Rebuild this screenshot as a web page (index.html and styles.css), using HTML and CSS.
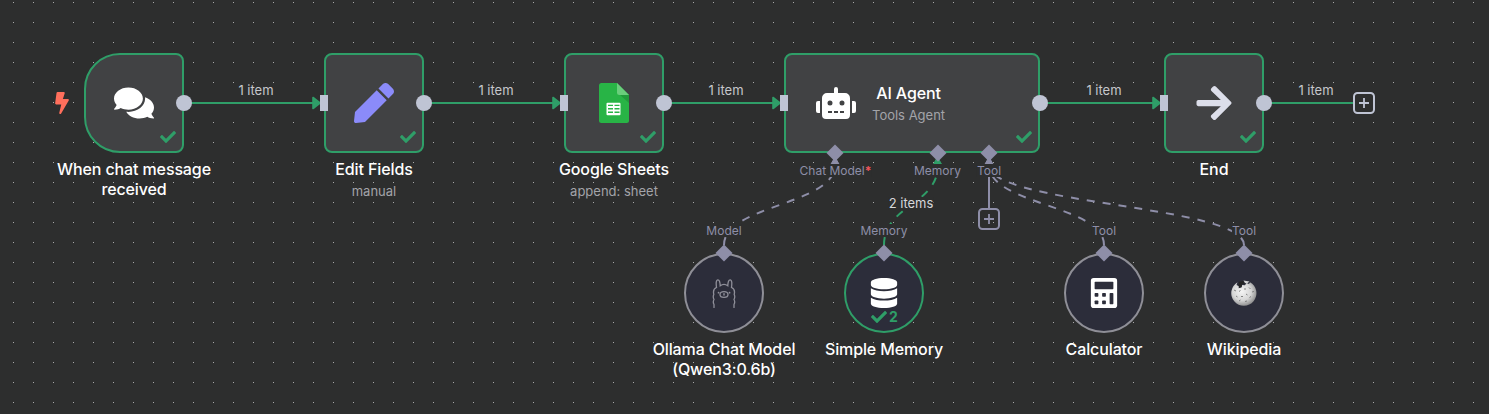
FILE: index.html
```html
<!DOCTYPE html>
<html lang="en">
<head>
<meta charset="utf-8">
<title>Workflow</title>
<link rel="stylesheet" href="styles.css">
</head>
<body>
<svg class="defs" width="0" height="0" aria-hidden="true">
  <symbol id="check" viewBox="0 0 512 512"><path d="M173.898 439.404l-166.4-166.4c-9.997-9.997-9.997-26.206 0-36.204l36.203-36.204c9.997-9.998 26.207-9.998 36.204 0L192 312.69 432.095 72.596c9.997-9.997 26.207-9.997 36.204 0l36.203 36.204c9.997 9.997 9.997 26.206 0 36.204l-294.4 294.401c-9.998 9.997-26.207 9.997-36.204-.001z"/></symbol>
  <symbol id="plus" viewBox="0 0 22 22"><rect x="1" y="1" width="20" height="20" rx="3.5" fill="none" stroke="currentColor" stroke-width="2"/><path d="M11 6v10M6 11h10" stroke="currentColor" stroke-width="1.8"/></symbol>
</svg>
<main class="canvas">
  <svg class="edges" width="1489" height="414" viewBox="0 0 1489 414">
    <defs>
      <path id="head" d="M-7 -5.5L0 0L-7 5.5Z" stroke-width="1.6" stroke-linejoin="round"/>
      <path id="head-up" d="M0 0L4.200 7.500H-4.200Z" stroke-width="1" stroke-linejoin="round"/>
    </defs>
    <g class="edge">
      <path d="M184 103H314M424 103H554M664 103H774M1040 103H1154M1264 103H1353"/>
      <g class="edge-head">
        <use href="#head" x="320" y="103"/><use href="#head" x="560" y="103"/><use href="#head" x="780" y="103"/><use href="#head" x="1160" y="103"/>
        <use href="#head-up" x="937.500" y="157"/>
      </g>
      <path class="dashed" d="M884 245C884 205 938 205 938 165"/>
    </g>
    <g class="edge edge-ai">
      <path class="dashed" d="M724 245C724 205 835 205 835 165"/>
      <path class="dashed" d="M1104 245C1104 205 989 205 989 165"/>
      <path class="dashed" d="M1244 245C1244 205 989 205 989 165"/>
      <path d="M989 160V208"/>
      <g class="edge-head">
        <use href="#head-up" x="835" y="157"/>
        <use href="#head-up" x="989" y="157"/>
      </g>
    </g>
  </svg>

  <span class="edge-label at-256">1 item</span>
  <span class="edge-label at-496">1 item</span>
  <span class="edge-label at-726">1 item</span>
  <span class="edge-label at-1104">1 item</span>
  <span class="edge-label at-1316">1 item</span>
  <span class="edge-label at-memory">2 items</span>

  <svg class="bolt" viewBox="0 0 320 512"><path d="M296 160H180.6l42.6-129.8C227.2 15 215.7 0 200 0H56C44 0 33.8 8.9 32.2 20.8l-32 240C-1.7 275.2 9.5 288 24 288h118.7L96.6 482.5c-3.6 15.2 8 29.5 23.3 29.5 8.4 0 16.4-4.4 20.8-12l176-304c9.3-15.9-2.2-36-20.7-36z"/></svg>

  <section class="node node-chat">
    <div class="box box-trigger">
      <svg class="icon-40" viewBox="0 0 576 512" fill="#fff"><path d="M416 192c0-88.4-93.1-160-208-160S0 103.6 0 192c0 34.3 14.1 65.9 38 92-13.4 30.2-35.5 54.2-35.8 54.5-2.2 2.3-2.8 5.7-1.5 8.7S4.8 352 8 352c36.6 0 66.9-12.3 88.7-25 32.2 15.7 70.3 25 111.3 25 114.9 0 208-71.6 208-160zm122 220c23.9-26 38-57.7 38-92 0-66.9-53.5-124.2-129.3-148.1.9 6.6 1.3 13.3 1.3 20.1 0 105.9-107.7 192-240 192-10.8 0-21.3-.8-31.7-1.9C207.8 439.6 281.8 480 368 480c41 0 79.1-9.2 111.3-25 21.8 12.7 52.1 25 88.7 25 3.2 0 6.1-1.9 7.3-4.8 1.3-2.9.7-6.3-1.5-8.7-.3-.3-22.4-24.2-35.8-54.5z"/></svg>
      <svg class="status"><use href="#check"/></svg>
      <i class="port-out"></i>
    </div>
    <div class="title">When chat message<br>received</div>
  </section>

  <section class="node node-edit">
    <div class="box">
      <svg class="icon-40" viewBox="0 0 512 512" fill="#8b8bfa"><path d="M290.74 93.24l128.02 128.02-277.99 277.99-114.14 12.6C11.35 513.54-1.56 500.62.14 485.34l12.7-114.22 277.9-277.88zm207.2-19.06l-60.11-60.11c-18.75-18.75-49.16-18.75-67.91 0l-56.55 56.55 128.02 128.02 56.55-56.55c18.75-18.76 18.75-49.16 0-67.91z"/></svg>
      <svg class="status"><use href="#check"/></svg>
      <i class="port-in"></i><i class="port-out"></i>
    </div>
    <div class="title">Edit Fields</div>
    <div class="subtitle">manual</div>
  </section>

  <section class="node node-sheets">
    <div class="box">
      <svg class="icon-40" viewBox="0 0 40 40">
        <path d="M7.500 0H23L35 12V37.500Q35 40 32.500 40H7.500Q5 40 5 37.500V2.500Q5 0 7.500 0Z" fill="#28b446"/>
        <path d="M25 11L35 20V12Z" fill="#219b3b"/>
        <path d="M23 0L35 12H25.500Q23 12 23 9.500Z" fill="#6ace7c"/>
        <rect x="12.500" y="19.700" width="14" height="12.600" rx="1" fill="#fff"/>
        <path d="M14 22.400h5M20.500 22.400h5M14 25.800h5M20.500 25.800h5M14 29.200h5M20.500 29.200h5" stroke="#28b446" stroke-width="1.400"/>
      </svg>
      <svg class="status"><use href="#check"/></svg>
      <i class="port-in"></i><i class="port-out"></i>
    </div>
    <div class="title">Google Sheets</div>
    <div class="subtitle">append: sheet</div>
  </section>

  <section class="node node-agent">
    <div class="box box-agent">
      <svg class="icon-40" viewBox="0 0 640 512" fill="#fff"><path d="M32,224H64V416H32A31.96166,31.96166,0,0,1,0,384V256A31.96166,31.96166,0,0,1,32,224Zm512-48V448a64.06328,64.06328,0,0,1-64,64H160a64.06328,64.06328,0,0,1-64-64V176a79.974,79.974,0,0,1,80-80H288V32a32,32,0,0,1,64,0V96H464A79.974,79.974,0,0,1,544,176ZM264,256a40,40,0,1,0-40,40A39.997,39.997,0,0,0,264,256Zm-8,128H192v32h64Zm96,0H288v32h64ZM456,256a40,40,0,1,0-40,40A39.997,39.997,0,0,0,456,256Zm-8,128H384v32h64ZM640,256V384a31.96166,31.96166,0,0,1-32,32H576V224h32A31.96166,31.96166,0,0,1,640,256Z"/></svg>
      <div class="agent-text">
        <div class="title">AI Agent</div>
        <div class="subtitle">Tools Agent</div>
      </div>
      <svg class="status"><use href="#check"/></svg>
      <i class="port-in"></i><i class="port-out"></i>
      <i class="diamond d-model"></i><i class="diamond d-memory"></i><i class="diamond d-tool"></i>
      <span class="port-label l-model">Chat Model<b>*</b></span>
      <span class="port-label l-memory">Memory</span>
      <span class="port-label l-tool">Tool</span>
    </div>
  </section>

  <section class="node node-end">
    <div class="box">
      <svg class="icon-40" viewBox="0 0 448 512" fill="#dcdeea"><path d="M190.5 66.9l22.2-22.2c9.4-9.4 24.6-9.4 33.9 0L441 239c9.4 9.4 9.4 24.6 0 33.9L246.6 467.3c-9.4 9.4-24.6 9.4-33.9 0l-22.2-22.2c-9.5-9.5-9.300-25 .4-34.300L311.400 296H24c-13.300 0-24-10.700-24-24v-32c0-13.300 10.700-24 24-24h287.400L190.900 101.200c-9.800-9.300-10-24.800-.4-34.300z"/></svg>
      <svg class="status"><use href="#check"/></svg>
      <i class="port-in"></i><i class="port-out"></i>
    </div>
    <div class="title">End</div>
  </section>
  <svg class="plus plus-end"><use href="#plus"/></svg>
  <svg class="plus plus-tool"><use href="#plus"/></svg>

  <section class="node sub node-ollama">
    <div class="round">
      <svg class="icon-30" viewBox="0 0 30 30" fill="none" stroke="#8f8f99" stroke-width="1.300" stroke-linecap="round">
        <path d="M5 29.500V26.500Q3.600 24 5 21.500Q3.600 19 4.800 16.500Q3.500 11 7.500 9.500Q6.500 2 8.700 1.800Q11 1.600 11.200 7.800Q15 4.800 18.800 7.800Q19 1.600 21.300 1.800Q23.500 2 22.500 9.500Q26.500 11 25.200 16.500Q26.400 19 25 21.500Q26.400 24 25 26.500V29.500"/>
        <ellipse cx="15" cy="16.500" rx="4" ry="2.900"/>
        <path d="M14.300 15.800L15 16.300L15.700 15.800M15 16.300V17.400" stroke-width="1"/>
        <path d="M9.500 14.700h.1M20.500 14.700h.1" stroke-width="1.700"/>
      </svg>
      <i class="diamond d-top"></i>
      <span class="port-label l-top">Model</span>
    </div>
    <div class="title">Ollama Chat Model<br>(Qwen3:0.6b)</div>
  </section>

  <section class="node sub node-memory">
    <div class="round round-ok">
      <svg class="icon-30" viewBox="0 0 448 512" fill="#fff"><path d="M448 73.143v45.714C448 159.143 347.667 192 224 192S0 159.143 0 118.857V73.143C0 32.857 100.333 0 224 0s224 32.857 224 73.143zM448 176v102.857C448 319.143 347.667 352 224 352S0 319.143 0 278.857V176c48.125 33.143 136.208 48.572 224 48.572S399.874 209.143 448 176zm0 160v102.857C448 479.143 347.667 512 224 512S0 479.143 0 438.857V336c48.125 33.143 136.208 48.572 224 48.572S399.874 369.143 448 336z"/></svg>
      <div class="runs"><svg><use href="#check"/></svg><span>2</span></div>
      <i class="diamond d-top"></i>
      <span class="port-label l-top">Memory</span>
    </div>
    <div class="title">Simple Memory</div>
  </section>

  <section class="node sub node-calc">
    <div class="round">
      <svg class="icon-30" viewBox="0 0 448 512"><rect width="448" height="512" rx="48" fill="#fff"/><g fill="#2c2d3a"><rect x="64" y="64" width="320" height="128" rx="13"/><rect x="64" y="256" width="64" height="64" rx="13"/><rect x="192" y="256" width="64" height="64" rx="13"/><rect x="64" y="384" width="64" height="64" rx="13"/><rect x="192" y="384" width="64" height="64" rx="13"/><rect x="320" y="256" width="64" height="192" rx="13"/></g></svg>
      <i class="diamond d-top"></i>
      <span class="port-label l-top">Tool</span>
    </div>
    <div class="title">Calculator</div>
  </section>

  <section class="node sub node-wiki">
    <div class="round">
      <svg class="icon-30" viewBox="0 0 30 30">
        <defs><radialGradient id="globe" cx=".42" cy=".4" r=".62"><stop offset="0" stop-color="#f4f4f4"/><stop offset=".6" stop-color="#d6d6d6"/><stop offset="1" stop-color="#8d8d8d"/></radialGradient></defs>
        <path d="M8.500 4.300L7.500 7L10 8.200L9.600 10.300L12.500 9.600L13.200 7L16 7.200L17.500 5L20 6L21 4.200A12.600 12.600 0 1 1 8.500 4.300Z" fill="url(#globe)"/>
        <path d="M10 3.800L14 3L16 5.500L13 6L12.500 9L10 9.500L9.500 7.500Z" fill="#242424"/>
        <path d="M14.500 2.600L20.500 3.600L18 5.400L16 5Z" fill="#d4d4d4"/>
        <path d="M5 12l2 1M10 13.500l1.500-1M15 11h2M20 9.500l1.500 1.500M23 14l2-.5M7 18l1.500 1M12 18.500h2M17 16l1.500 1M20.500 19.500l1.500-1M10 23l1.500-1M16 23.500l2-.5" stroke="#777" stroke-width=".9"/>
      </svg>
      <i class="diamond d-top"></i>
      <span class="port-label l-top">Tool</span>
    </div>
    <div class="title">Wikipedia</div>
  </section>
</main>
</body>
</html>
```
FILE: styles.css
```css
:root {
  --bg: #2d2e2e;
  --green: #2f9e68;
  --port: #bfc4d4;
  --ai: #8e8ea8;
}
body { margin: 0; background: var(--bg); font-family: Inter, "Liberation Sans", sans-serif; }
.defs { position: absolute; }
.canvas {
  position: relative;
  width: 1489px;
  height: 414px;
  overflow: hidden;
  background-image: conic-gradient(from 270deg at 1px 1px, #a9aaaa 90deg, transparent 0);
  background-size: 20px 20px;
  background-position: 13px 2px;
}
.edges { position: absolute; inset: 0; }
.edge { fill: none; stroke: var(--green); stroke-width: 2; }
.edge-ai { stroke: var(--ai); }
.edge-head { fill: var(--green); }
.edge-ai .edge-head { fill: var(--ai); }
.dashed { stroke-dasharray: 8 8; }

.edge-label {
  position: absolute;
  top: 82px;
  transform: translateX(-50%);
  font-size: 13px;
  line-height: 17px;
  color: #c6c7cb;
  white-space: nowrap;
}
.at-256 { left: 256px; }
.at-496 { left: 496px; }
.at-726 { left: 726px; }
.at-1104 { left: 1104px; }
.at-1316 { left: 1316px; }
.at-memory { left: 911px; top: 197px; line-height: 13px; color: #d6d7da; background: var(--bg); }

.node { position: absolute; top: 53px; width: 100px; display: flex; flex-direction: column; align-items: center; }
.node-chat { left: 84px; }
.node-edit { left: 324px; }
.node-sheets { left: 564px; }
.node-agent { left: 784px; width: 256px; }
.node-end { left: 1164px; }
.sub { top: 253px; width: 80px; }
.node-ollama { left: 684px; }
.node-memory { left: 844px; }
.node-calc { left: 1064px; }
.node-wiki { left: 1204px; }

.box, .round {
  position: relative;
  box-sizing: border-box;
  flex: none;
  display: flex;
  align-items: center;
  justify-content: center;
  margin-bottom: 6px;
}
.box { width: 100px; height: 100px; border: 2px solid var(--green); border-radius: 8px; background: #414244; }
.box-trigger { border-radius: 36px 8px 8px 36px; }
.box-agent { width: 256px; justify-content: flex-start; padding-left: 30px; gap: 16px; }
.agent-text { text-align: center; }
.round { width: 80px; height: 80px; border: 2px solid #8f8f97; border-radius: 50%; background: #2c2d3a; }
.round-ok { border-color: var(--green); }

.title { font-size: 16px; font-weight: 550; letter-spacing: -0.12px; line-height: 20px; color: #fff; text-align: center; white-space: nowrap; }
.subtitle { margin-top: 3px; font-size: 13px; line-height: 18px; color: #a3a4a9; white-space: nowrap; }

.icon-40 { width: 40px; height: 40px; }
.icon-30 { width: 30px; height: 30px; }
.status { position: absolute; right: 6px; bottom: 6px; width: 16px; height: 16px; fill: var(--green); }
.bolt { position: absolute; left: 54.5px; top: 92px; width: 14px; height: 22px; fill: #ff6f5c; }
.runs {
  position: absolute;
  left: 25px;
  top: 54px;
  display: flex;
  align-items: center;
  gap: 2px;
  color: var(--green);
  font-size: 14px;
  font-weight: 700;
  line-height: 16px;
}
.runs svg { width: 16px; height: 16px; fill: var(--green); }

.port-in, .port-out, .diamond { position: absolute; }
.port-in { left: -6px; top: 40px; width: 8px; height: 16px; background: var(--port); }
.port-out { right: -10px; top: 40px; width: 16px; height: 16px; border-radius: 50%; background: var(--port); }
.diamond { width: 12px; height: 12px; background: var(--ai); transform: rotate(45deg); }
.d-model { left: 43px; top: 92px; }
.d-memory { left: 146px; top: 92px; }
.d-tool { left: 197px; top: 92px; }
.d-top { left: 32px; top: -8px; }

.port-label {
  position: absolute;
  transform: translateX(-50%);
  font-size: 12px;
  line-height: 13px;
  color: var(--ai);
  background: var(--bg);
  white-space: nowrap;
}
.port-label b { color: #f2545b; font-weight: 700; }
.l-model { left: 49.5px; top: 109px; }
.l-memory { left: 151.5px; top: 109px; }
.l-tool { left: 203px; top: 109px; }
.l-top { left: 38px; top: -31px; }

.plus { position: absolute; width: 22px; height: 22px; }
.plus-end { left: 1353px; top: 92px; color: var(--port); }
.plus-tool { left: 978px; top: 208px; color: var(--ai); }
```
